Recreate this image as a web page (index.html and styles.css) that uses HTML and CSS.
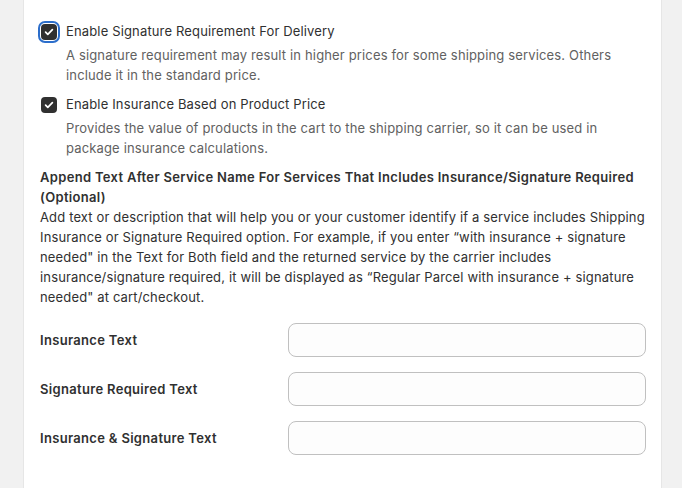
FILE: index.html
```html
<!DOCTYPE html>
<html>

	<head>
		<meta charset="UTF-8">
		<title>Shipping options</title>
		<link rel="stylesheet" href="styles.css">
	</head>

	<body>
		<div class="card">
			<div class="option">
				<label class="check">
					<span class="box focused">
						<svg viewBox="0 0 16 16"><path d="M4.6 8.2l2.2 2.2 4.6-4.8" /></svg>
					</span>
					<span class="check-label">Enable Signature Requirement For Delivery</span>
				</label>
				<p class="help">A signature requirement may result in higher prices for some shipping services. Others include it in the standard price.</p>
			</div>

			<div class="option">
				<label class="check">
					<span class="box">
						<svg viewBox="0 0 16 16"><path d="M4.6 8.2l2.2 2.2 4.6-4.8" /></svg>
					</span>
					<span class="check-label">Enable Insurance Based on Product Price</span>
				</label>
				<p class="help">Provides the value of products in the cart to the shipping carrier, so it can be used in package insurance calculations.</p>
			</div>

			<div class="append">
				<h3>Append Text After Service Name For Services That Includes Insurance/Signature Required (Optional)</h3>
				<p>Add text or description that will help you or your customer identify if a service includes Shipping Insurance or Signature Required option. For example, if you enter “with insurance + signature needed" in the Text for Both field and the returned service by the carrier includes insurance/signature required, it will be displayed as “Regular Parcel with insurance + signature needed" at cart/checkout.</p>
			</div>

			<div class="fields">
				<label class="field-label" for="ins">Insurance Text</label>
				<input class="field" id="ins" type="text" />

				<label class="field-label" for="sig">Signature Required Text</label>
				<input class="field" id="sig" type="text" />

				<label class="field-label" for="both">Insurance &amp; Signature Text</label>
				<input class="field" id="both" type="text" />
			</div>
		</div>
	</body>

</html>
```

FILE: styles.css
```css
* {
	margin: 0;
	padding: 0;
	box-sizing: border-box;
}

body {
	background: #f1f1f1;
	font-family: Inter, "Noto Sans", sans-serif;
	font-size: 13px;
	line-height: 20px;
	letter-spacing: 0.15px;
	color: #303030;
}

.card {
	width: 639px;
	min-height: 488px;
	margin-left: 23px;
	padding: 21px 15px 40px 16px;
	background: #fff;
	border-left: 1px solid #e6e6e6;
	border-right: 1px solid #e6e6e6;
}

.option {
	margin-bottom: 9px;
}

.check {
	display: flex;
	align-items: center;
	gap: 9px;
	cursor: pointer;
}

.box {
	width: 16px;
	height: 16px;
	margin-left: 1px;
	margin-top: 1px;
	border-radius: 4px;
	background: #303030;
	display: flex;
	align-items: center;
	justify-content: center;
}

.box.focused {
	outline: 2px solid #2c6ecb;
	outline-offset: 1px;
}

.box svg {
	width: 16px;
	height: 16px;
	fill: none;
	stroke: #fff;
	stroke-width: 1.7;
	stroke-linecap: round;
	stroke-linejoin: round;
}

.help {
	padding-left: 26px;
	margin-top: 4px;
	color: #616161;
}

.append h3,
.field-label {
	font-size: 13px;
	font-weight: 600;
	letter-spacing: 0.32px;
}

.fields {
	display: grid;
	grid-template-columns: 248px 1fr;
	align-items: center;
	row-gap: 15px;
	margin-top: 16px;
}

.field {
	height: 34px;
	width: 100%;
	border: 1px solid #c0c0c0;
	border-radius: 8px;
	background: #fdfdfd;
	padding: 0 12px;
	font: inherit;
}
```
